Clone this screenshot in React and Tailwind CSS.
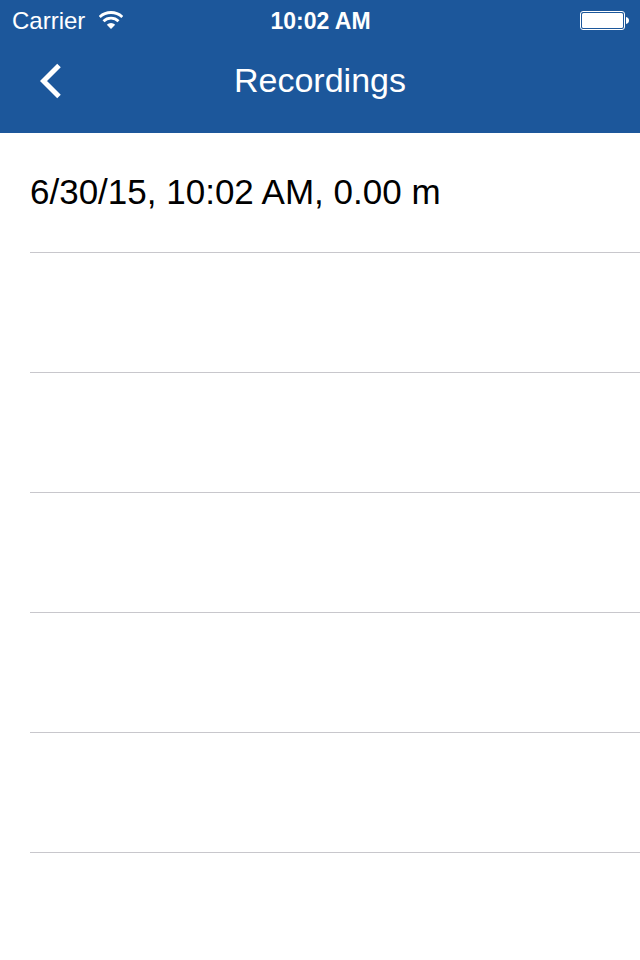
const rows = ["6/30/15, 10:02 AM, 0.00 m", "", "", "", "", ""];

function Wifi() {
  return (
    <svg className="h-5 w-6" viewBox="0 0 24 20" fill="none" stroke="white" aria-hidden="true">
      <path d="M0.7 6a16.500 16.500 0 0 1 22.600 0" strokeWidth="2.8" />
      <path d="M4.500 10.200a10.800 10.800 0 0 1 15 0" strokeWidth="2.8" />
      <path d="M12 18l-4.200-4.200a6 6 0 0 1 8.400 0z" fill="white" stroke="none" />
    </svg>
  );
}

function Battery() {
  return (
    <svg className="h-5 w-[49px]" viewBox="0 0 49 20" aria-hidden="true">
      <rect x="0.5" y="0.5" width="44" height="18" rx="2.500" fill="none" stroke="white" />
      <rect x="2" y="2" width="41" height="15" rx="1.500" fill="white" />
      <path d="M46 6c4 0.500 4 6.500 0 7z" fill="white" />
    </svg>
  );
}

export default function App() {
  return (
    <div className="min-h-screen bg-white font-['Liberation_Sans',Arial,sans-serif] text-black">
      <header className="bg-[#1c579b] text-white">
        <div className="grid h-[42px] grid-cols-3 items-center pl-3 pr-[11px]">
          <div className="flex items-center gap-3.5 text-2xl">
            <span>Carrier</span>
            <Wifi />
          </div>
          <time className="text-center text-[23px] font-bold">10:02 AM</time>
          <div className="flex justify-end"><Battery /></div>
        </div>
        <div className="grid h-[91px] grid-cols-[64px_1fr_64px] items-start">
          <button type="button" aria-label="Back" className="flex h-[78px] items-center justify-end">
            <svg className="h-9 w-6" viewBox="0 0 24 36" fill="none" stroke="white" strokeWidth="5" aria-hidden="true">
              <path d="M19 2.500L3.500 18 19 33.500" />
            </svg>
          </button>
          <h1 className="flex h-[76px] items-center justify-center text-[34px]">Recordings</h1>
        </div>
      </header>
      <main>
        <ul className="pl-[30px]">
          {rows.map((row, i) => (
            <li key={i} className="flex h-[120px] items-center border-b border-[#c8c7cc] text-[35px]">
              {row}
            </li>
          ))}
        </ul>
      </main>
    </div>
  );
}
